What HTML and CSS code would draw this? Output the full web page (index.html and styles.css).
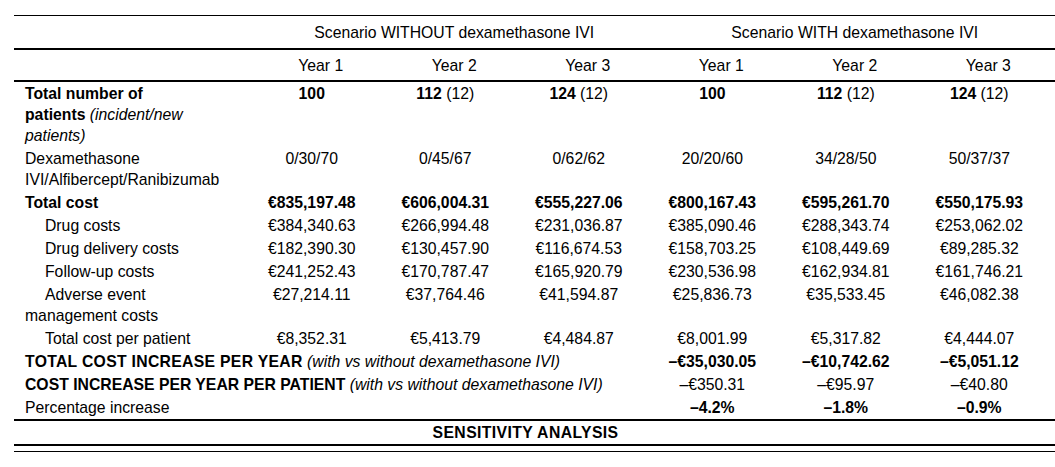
FILE: index.html
```html
<!DOCTYPE html>
<html lang="en">
<head>
<meta charset="utf-8">
<title>Budget impact</title>
<link rel="stylesheet" href="styles.css">
</head>
<body>
<div class="page">
  <table class="cost-table">
    <colgroup>
      <col class="c-label">
      <col class="c-val"><col class="c-val"><col class="c-val">
      <col class="c-val"><col class="c-val"><col class="c-val">
    </colgroup>
    <thead>
      <tr class="scen-row">
        <th></th>
        <th colspan="3">Scenario WITHOUT dexamethasone IVI</th>
        <th colspan="3">Scenario WITH dexamethasone IVI</th>
      </tr>
      <tr class="year-row">
        <th></th>
        <th>Year 1</th><th>Year 2</th><th>Year 3</th>
        <th>Year 1</th><th>Year 2</th><th>Year 3</th>
      </tr>
    </thead>
    <tbody>
      <tr>
        <td class="label"><span class="b">Total number of patients</span> <span class="i">(incident/new patients)</span></td>
        <td class="val"><span class="b">100</span></td>
        <td class="val"><span class="b">112</span> (12)</td>
        <td class="val"><span class="b">124</span> (12)</td>
        <td class="val"><span class="b">100</span></td>
        <td class="val"><span class="b">112</span> (12)</td>
        <td class="val"><span class="b">124</span> (12)</td>
      </tr>
      <tr>
        <td class="label">Dexamethasone IVI/Alfibercept/Ranibizumab</td>
        <td class="val">0/30/70</td>
        <td class="val">0/45/67</td>
        <td class="val">0/62/62</td>
        <td class="val">20/20/60</td>
        <td class="val">34/28/50</td>
        <td class="val">50/37/37</td>
      </tr>
      <tr class="b">
        <td class="label">Total cost</td>
        <td class="val">€835,197.48</td>
        <td class="val">€606,004.31</td>
        <td class="val">€555,227.06</td>
        <td class="val">€800,167.43</td>
        <td class="val">€595,261.70</td>
        <td class="val">€550,175.93</td>
      </tr>
      <tr>
        <td class="label sub">Drug costs</td>
        <td class="val">€384,340.63</td>
        <td class="val">€266,994.48</td>
        <td class="val">€231,036.87</td>
        <td class="val">€385,090.46</td>
        <td class="val">€288,343.74</td>
        <td class="val">€253,062.02</td>
      </tr>
      <tr>
        <td class="label sub">Drug delivery costs</td>
        <td class="val">€182,390.30</td>
        <td class="val">€130,457.90</td>
        <td class="val">€116,674.53</td>
        <td class="val">€158,703.25</td>
        <td class="val">€108,449.69</td>
        <td class="val">€89,285.32</td>
      </tr>
      <tr>
        <td class="label sub">Follow-up costs</td>
        <td class="val">€241,252.43</td>
        <td class="val">€170,787.47</td>
        <td class="val">€165,920.79</td>
        <td class="val">€230,536.98</td>
        <td class="val">€162,934.81</td>
        <td class="val">€161,746.21</td>
      </tr>
      <tr>
        <td class="label sub">Adverse event management costs</td>
        <td class="val">€27,214.11</td>
        <td class="val">€37,764.46</td>
        <td class="val">€41,594.87</td>
        <td class="val">€25,836.73</td>
        <td class="val">€35,533.45</td>
        <td class="val">€46,082.38</td>
      </tr>
      <tr>
        <td class="label sub">Total cost per patient</td>
        <td class="val">€8,352.31</td>
        <td class="val">€5,413.79</td>
        <td class="val">€4,484.87</td>
        <td class="val">€8,001.99</td>
        <td class="val">€5,317.82</td>
        <td class="val">€4,444.07</td>
      </tr>
      <tr>
        <td class="wide" colspan="4"><span class="b caps">TOTAL COST INCREASE PER YEAR</span> <span class="i">(with vs without dexamethasone IVI)</span></td>
        <td class="val b">–€35,030.05</td>
        <td class="val b">–€10,742.62</td>
        <td class="val b">–€5,051.12</td>
      </tr>
      <tr>
        <td class="wide" colspan="4"><span class="b">COST INCREASE PER YEAR PER PATIENT</span> <span class="i">(with vs without dexamethasone IVI)</span></td>
        <td class="val">–€350.31</td>
        <td class="val">–€95.97</td>
        <td class="val">–€40.80</td>
      </tr>
      <tr class="last">
        <td class="wide" colspan="4">Percentage increase</td>
        <td class="val b">–4.2%</td>
        <td class="val b">–1.8%</td>
        <td class="val b">–0.9%</td>
      </tr>
      <tr class="sens">
        <td colspan="7">SENSITIVITY ANALYSIS</td>
      </tr>
    </tbody>
  </table>
  <div class="tail-rule"></div>
</div>
</body>
</html>
```

FILE: styles.css
```css
body {
  margin: 0;
  background: #fff;
  color: #000;
  font-family: "Liberation Sans", Arial, sans-serif;
  font-size: 15.75px;
  line-height: 21px;
}

.page {
  padding: 15px 0 0 14px;
}

.cost-table {
  width: 1041px;
  table-layout: fixed;
  border-collapse: separate;
  border-spacing: 0;
  border-top: 1px solid #000;
}

.c-label { width: 240px; }
.c-val { width: 133.5px; }

th {
  font-weight: normal;
  text-align: center;
}

.scen-row th {
  padding: 6px 0 5px;
  border-bottom: 2px solid #000;
}

.year-row th {
  padding: 5px 0 4px;
  border-bottom: 2px solid #000;
}

td {
  padding: 1px 0;
  vertical-align: top;
}

.label {
  padding: 1px 56px 1px 11px;
  text-align: left;
}

.label.sub {
  text-indent: 20px;
}

.wide {
  padding-left: 11px;
  text-align: left;
}

.val {
  text-align: center;
  padding-right: 18px;
}

.b { font-weight: bold; }
.i { font-style: italic; font-weight: normal; }
.caps { letter-spacing: 0.3px; }

.last td {
  border-bottom: 2px solid #000;
}

.sens td {
  border-bottom: 2px solid #000;
  text-align: center;
  font-weight: bold;
  letter-spacing: 0.4px;
  padding-right: 18px;
}

.tail-rule {
  width: 1041px;
  margin-top: 5px;
  border-top: 1px solid #000;
}
```
